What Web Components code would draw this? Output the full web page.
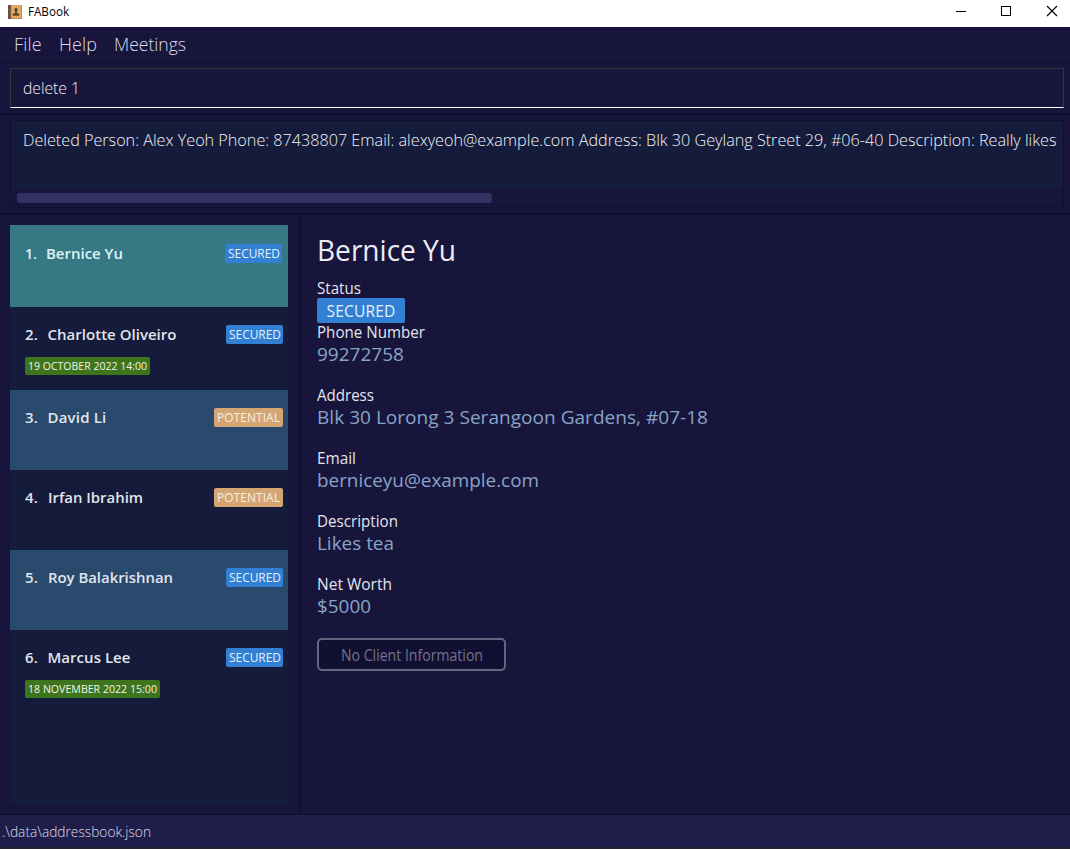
<!DOCTYPE html>
<html lang="en">
<head>
<meta charset="utf-8">
<title>FABook</title>
<style>
html,body{margin:0;height:100%;overflow:hidden;background:#17153b}
body{font-family:"Open Sans","Noto Sans",sans-serif;color:#e6e6f0}
</style>
</head>
<body>
<fa-app></fa-app>
<script>
const define = (name, html, setup) => customElements.define(name, class extends HTMLElement {
  connectedCallback() {
    if (this.shadowRoot) return;
    const root = this.attachShadow({ mode: "open" });
    const t = document.createElement("template");
    t.innerHTML = typeof html === "function" ? html(this) : html;
    root.append(t.content.cloneNode(true));
    if (setup) setup(this, root);
  }
});

/* One line of text set to a measure given in pixels: condensed when too wide, tracked when too narrow. */
define("fit-text", `<style>:host{display:inline-block;white-space:pre;flex:none}span{display:inline-block;transform-origin:0 50%}</style><span><slot></slot></span>`,
  (el, root) => {
    const span = root.querySelector("span");
    const target = parseFloat(el.getAttribute("w"));
    if (!target) return;
    const natural = span.getBoundingClientRect().width;
    if (natural > target) span.style.transform = `scaleX(${target / natural})`;
    else span.style.letterSpacing = (target - natural) / el.textContent.length + "px";
    el.style.width = target + "px";
  });

define("title-bar", `<style>
:host{display:flex;align-items:center;height:27px;box-sizing:border-box;background:#fff;color:#000;font:12px/22px "Open Sans",sans-serif;padding:0 12px 3px 8px}
.logo{display:block;margin-right:6px;margin-top:-1px}
.spacer{flex:1}
.controls{display:flex;gap:34px;align-items:center;margin-top:-2px}
</style>
<svg class="logo" width="14" height="14" viewBox="0 0 14 14">
<rect width="14" height="14" rx=".8" fill="#dcae62"/><rect width="3" height="14" fill="#65513e"/><path d="M3 0v14" stroke="#a77b3e"/><path d="M3 13.5h11M13.5 0v14" stroke="#b78c4d"/>
<path d="M8 3a1.8 1.8 0 0 1 1 3.2L8.8 8l2.4 1v1.7H4.8V9l2.4-1L7 6.2A1.8 1.8 0 0 1 8 3z" fill="#59442b"/></svg>
<fit-text w="41">FABook</fit-text><span class="spacer"></span>
<div class="controls">
<svg width="12" height="12"><path d="M2 6.5h10" stroke="#000"/></svg>
<svg width="12" height="12"><rect x="1.5" y="1.5" width="9" height="9" fill="none" stroke="#000"/></svg>
<svg width="12" height="12"><path d="M1 1l10 10M11 1L1 11" stroke="#000" stroke-width="1.1"/></svg>
</div>`);

define("menu-bar", `<style>
:host{display:flex;gap:17px;height:36px;box-sizing:border-box;padding-left:14px;border-bottom:1px solid #110f30;background:#17153b;font-size:18px;font-weight:300;line-height:35px;color:#dddde8}
</style><fit-text w="28">File</fit-text><fit-text w="38">Help</fit-text><fit-text w="72">Meetings</fit-text>`);

define("command-box", `<style>
:host{display:block;height:52px;box-sizing:border-box;padding:5px 6px 5px 10px;border-bottom:2px solid #110f30}
div{height:40px;box-sizing:border-box;border:1px solid #383838;border-bottom:1px solid #fff;padding-left:12px;font-size:17px;font-weight:300;line-height:38px;color:#f0f0f5}
</style><div><fit-text w="57">delete 1</fit-text></div>`);

define("result-display", `<style>
:host{display:block;height:100px;box-sizing:border-box;padding:5px 6px 5px 10px;border-bottom:2px solid #110f30}
.frame{height:88px;box-sizing:border-box;border:1px solid #121031;display:flex;flex-direction:column;overflow:hidden}
.text{height:68px;box-sizing:border-box;margin:0 1px;padding:6px 0 0 10.5px;background:#141b3b;font-size:17px;font-weight:300;line-height:26px;color:#f4f4f6}
.bar{width:475px;height:10px;margin:4px 0 0 6px;border-radius:3px;background:#363163}
</style><div class="frame"><div class="text"><fit-text w="1033.5">Deleted Person: Alex Yeoh Phone: 87438807 Email: alexyeoh@example.com Address: Blk 30 Geylang Street 29, #06-40 Description: Really likes</fit-text></div><div class="bar"></div></div>`);

/* Status or meeting label; its size comes from custom properties. */
define("tag-label", `<style>
:host{display:inline-flex;justify-content:center;align-items:center;box-sizing:border-box;flex:none;width:var(--w);height:var(--h,19px);border-radius:2px;background:#3180d3;color:#e8f0fa;font-size:12px;font-weight:400;line-height:18px}
:host([kind=potential]){background:#d5a673;color:#f4eee6}
:host([kind=meeting]){background:#3e751c;color:#f0f4ec;font-size:11px}
:host([kind=large]){font-size:15.5px;line-height:24px}
</style><slot></slot>`);

define("person-card", el => `<style>
:host{display:block;height:80px;box-sizing:border-box;padding:18px 5px 0 15px;background:#141b3b;color:#e2e4ec}
:host([odd]){background:#294a6d}
:host([tall]){height:83px}
:host([selected]){height:82px;background:#367884;color:#dcf4f5;padding:19px 6px 0 15px}
.row{display:flex;align-items:center;height:19px;font-size:15px;font-weight:600;line-height:19px}
.id{width:22.5px}:host([selected]) .id{width:20.5px}
.name{flex:1}
.meeting{margin-top:13px;display:flex}
</style><div class="row"><span class="id"><fit-text w="${el.hasAttribute("selected") ? 12 : 13}">${el.getAttribute("index")}.</fit-text></span><span class="name"><slot></slot></span><slot name="status"></slot></div><div class="meeting"><slot name="meeting"></slot></div>`);

const people = [
  ["Bernice Yu", 77, "secured", "", "selected"],
  ["Charlotte Oliveiro", 129, "secured", "19 OCTOBER 2022 14:00", "tall", 125, 119],
  ["David Li", 59, "potential", "", "odd"],
  ["Irfan Ibrahim", 95, "potential", "", ""],
  ["Roy Balakrishnan", 125, "secured", "", "odd"],
  ["Marcus Lee", 83, "secured", "18 NOVEMBER 2022 15:00", "", 135, 129]
];
define("person-list", `<style>
:host{display:block;box-sizing:border-box;width:301px;flex:none;padding:10px 11px 10px 10px;border-right:2px solid #110f30}
.list{height:100%;background:#141b3b}
</style><div class="list">${people.map(([n, w, s, m, attr, mw, tw], i) => `<person-card index="${i + 1}" ${attr}><fit-text w="${w}">${n}</fit-text><tag-label slot="status" kind="${s}" style="--w:${s === "secured" ? 57 : 69}px"><fit-text w="${s === "secured" ? 52 : 63}">${s.toUpperCase()}</fit-text></tag-label>${m ? `<tag-label slot="meeting" kind="meeting" style="--w:${mw}px;--h:18px"><fit-text w="${tw}">${m}</fit-text></tag-label>` : ""}</person-card>`).join("")}</div>`);

define("detail-field", el => `<style>
:host{display:block;height:43px;margin-bottom:20px}
.label{height:21px;font-size:15.5px;line-height:21px;color:#e4e4ee}
.value{height:22px;font-size:19px;line-height:22px;color:#88a4c6}
</style><div class="label"><fit-text w="${el.getAttribute("lw")}">${el.getAttribute("label")}</fit-text></div><div class="value"><slot></slot></div>`);

define("person-detail", `<style>
:host{display:block;flex:1;min-width:0;padding:10px 0 0 16px}
.title{height:53px;font-size:29px;line-height:50px;color:#ececf4}
.label{height:20px;font-size:15.5px;line-height:21px;color:#e4e4ee}
.status{display:flex;height:24px}
button{display:flex;align-items:center;justify-content:center;width:189px;height:33px;margin-top:21px;box-sizing:border-box;padding:0;border:2px solid #66657e;border-radius:5px;background:#111033;color:#73728a;font:15.5px/28px "Open Sans",sans-serif}
</style>
<div class="title"><fit-text w="139">Bernice Yu</fit-text></div>
<div class="label"><fit-text w="44">Status</fit-text></div>
<div class="status"><tag-label kind="large" style="--w:88px;--h:25px"><fit-text w="69">SECURED</fit-text></tag-label></div>
<detail-field label="Phone Number" lw="108"><fit-text w="87">99272758</fit-text></detail-field>
<detail-field label="Address" lw="57"><fit-text w="391">Blk 30 Lorong 3 Serangoon Gardens, #07-18</fit-text></detail-field>
<detail-field label="Email" lw="39"><fit-text w="222">berniceyu@example.com</fit-text></detail-field>
<detail-field label="Description" lw="81"><fit-text w="77">Likes tea</fit-text></detail-field>
<detail-field label="Net Worth" lw="75"><fit-text w="54">$5000</fit-text></detail-field>
<button><fit-text w="142">No Client Information</fit-text></button>`);

define("status-bar", `<style>
:host{display:block;height:34px;box-sizing:border-box;background:#1f1d49;border-bottom:2px solid #25232b;padding-left:2px;font-size:14.5px;font-weight:300;line-height:33px;color:#dedeea}
</style><fit-text w="149">.\\data\\addressbook.json</fit-text>`);

define("fa-app", `<style>
:host{display:flex;flex-direction:column;width:100vw;height:100vh;overflow:hidden;background:#17153b}
main{display:flex;flex:1;min-height:0;border-bottom:1px solid #110f30}
</style><title-bar></title-bar><menu-bar></menu-bar><command-box></command-box><result-display></result-display><main><person-list></person-list><person-detail></person-detail></main><status-bar></status-bar>`);
</script>
</body>
</html>
